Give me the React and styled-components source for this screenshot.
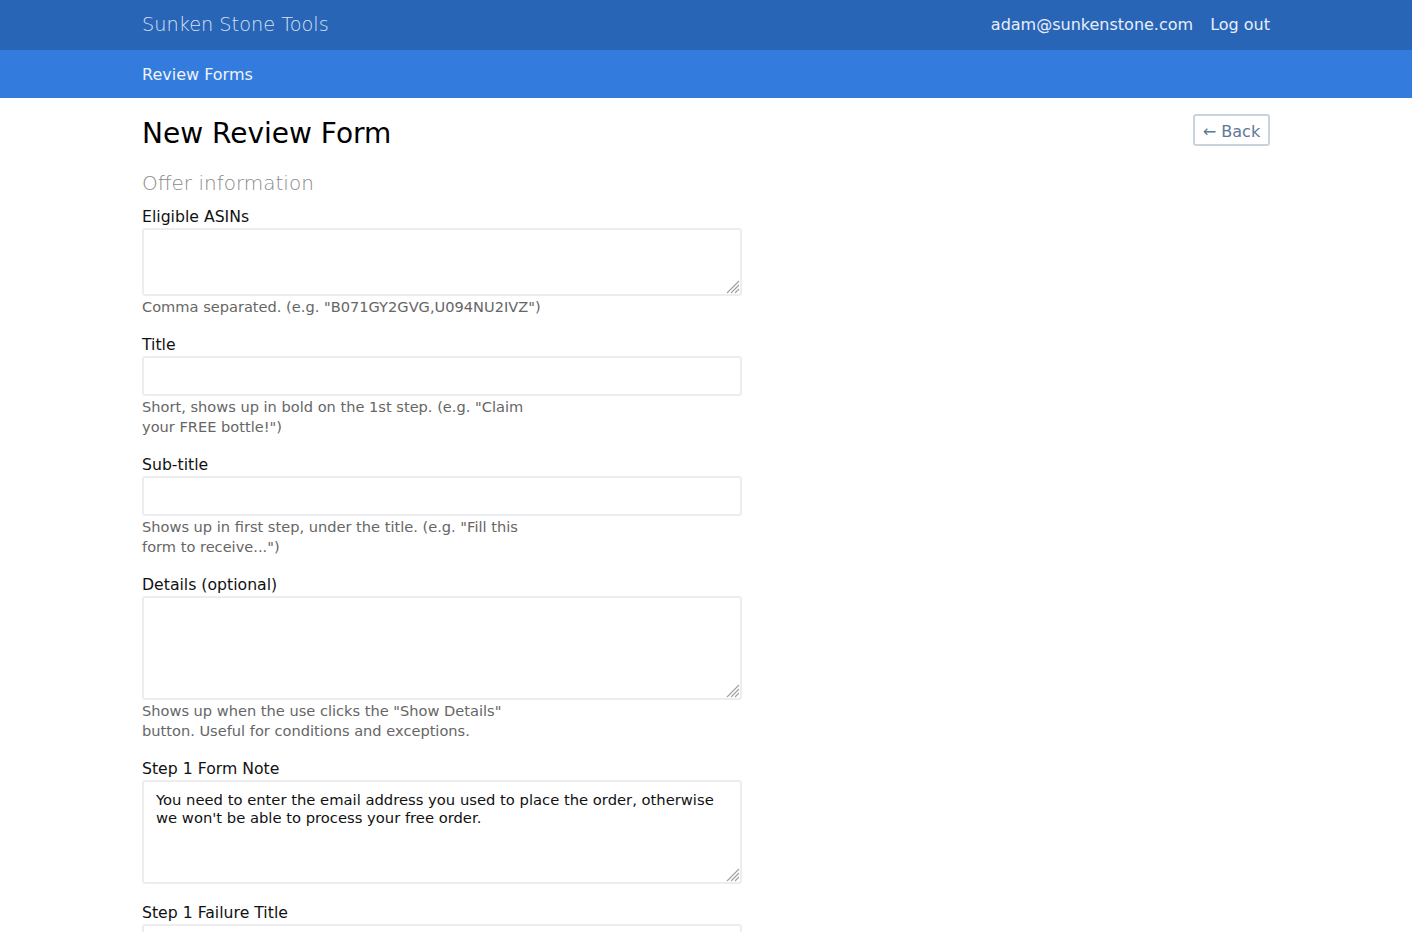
import React from "react";
import styled, { createGlobalStyle } from "styled-components";

const GlobalStyle = createGlobalStyle`
  body {
    margin: 0;
    background: #fff;
    font-family: "DejaVu Sans", "Liberation Sans", sans-serif;
    color: #111;
  }
  * { box-sizing: border-box; }
`;

const fields = [
  { label: "Eligible ASINs", kind: "area", rows: 68, help: 'Comma separated. (e.g. "B071GY2GVG,U094NU2IVZ")' },
  { label: "Title", kind: "input", help: 'Short, shows up in bold on the 1st step. (e.g. "Claim your FREE bottle!")' },
  { label: "Sub-title", kind: "input", help: 'Shows up in first step, under the title. (e.g. "Fill this form to receive...")' },
  { label: "Details (optional)", kind: "area", rows: 104, help: 'Shows up when the use clicks the "Show Details" button. Useful for conditions and exceptions.' },
  {
    label: "Step 1 Form Note",
    kind: "area",
    rows: 104,
    value: "You need to enter the email address you used to place the order, otherwise we won't be able to process your free order.",
  },
  { label: "Step 1 Failure Title", kind: "input" },
];

// firefox-like resize grip
const Grip = () => (
  <GripIcon width="14" height="14" viewBox="0 0 14 14">
    <path d="M13 1 L1 13 M13 5 L5 13 M13 9 L9 13" stroke="#a0a0a0" strokeWidth="1.1" />
  </GripIcon>
);

export default function App() {
  return (
    <>
      <GlobalStyle />
      <TopBar>
        <Container>
          <Brand>Sunken Stone Tools</Brand>
          <UserLinks>
            <NavLink>adam@sunkenstone.com</NavLink>
            <NavLink>Log out</NavLink>
          </UserLinks>
        </Container>
      </TopBar>
      <SubBar>
        <Container>
          <SubLink>Review Forms</SubLink>
        </Container>
      </SubBar>
      <Main>
        <Container>
          <PageHead>
            <Heading>New Review Form</Heading>
            <BackButton>← Back</BackButton>
          </PageHead>
        </Container>
        <Container>
          <Form>
            <SectionTitle>Offer information</SectionTitle>
            {fields.map((f) => (
              <Group key={f.label} $hasHelp={!!f.help}>
                <Label>{f.label}</Label>
                {f.kind === "area" ? (
                  <AreaWrap>
                    <TextArea $h={f.rows} defaultValue={f.value || ""} />
                    <Grip />
                  </AreaWrap>
                ) : (
                  <Input type="text" />
                )}
                {f.help && <Help>{f.help}</Help>}
              </Group>
            ))}
          </Form>
        </Container>
      </Main>
    </>
  );
}

const Container = styled.div`
  width: 1128px;
  margin: 0 auto;
  display: flex;
  align-items: center;
  justify-content: space-between;
`;

const TopBar = styled.div`
  background: #2965b7;
  height: 50px;
  display: flex;
  align-items: center;
`;

const Brand = styled.div`
  font-size: 19.3px;
  font-weight: 200;
  color: #d6e2f4;
  margin-top: -2px;
`;

const UserLinks = styled.div`
  display: flex;
  gap: 17px;
  margin-top: -2px;
`;

const NavLink = styled.a`
  font-size: 16px;
  color: #e8eef8;
  cursor: pointer;
`;

const SubBar = styled.div`
  background: #337bdc;
  height: 48px;
  display: flex;
  align-items: center;
`;

const SubLink = styled.a`
  font-size: 16px;
  color: #eef3fc;
  cursor: pointer;
`;

const Main = styled.div`
  padding-top: 18px;
`;

const PageHead = styled.div`
  width: 100%;
  display: flex;
  justify-content: space-between;
  align-items: flex-start;
`;

const Heading = styled.h1`
  margin: 0;
  font-size: 28px;
  line-height: 36px;
  font-weight: 400;
  color: #000;
`;

const BackButton = styled.button`
  font-family: "DejaVu Sans", sans-serif;
  font-size: 16px;
  color: #5d7896;
  background: #fff;
  border: 2px solid #c9d3de;
  border-radius: 3px;
  height: 32px;
  width: 77px;
  padding: 3px 0 0;
  margin-top: -2px;
  cursor: pointer;
`;

const Form = styled.form`
  width: 600px;
  margin-top: 17px;
  display: flex;
  flex-direction: column;
`;

const SectionTitle = styled.h2`
  margin: 0 0 10px;
  font-size: 20px;
  line-height: 28px;
  font-weight: 300;
  color: #8a8a8a;
`;

const Group = styled.div`
  display: flex;
  flex-direction: column;
  margin-bottom: ${(p) => (p.$hasHelp ? 18 : 19)}px;
`;

const Label = styled.label`
  font-size: 15.7px;
  line-height: 20px;
  margin-bottom: 1px;
  color: #111;
`;

const fieldBase = `
  width: 600px;
  border: 2px solid #ececf1;
  border-radius: 3px;
  font-family: "DejaVu Sans", sans-serif;
  color: #111;
  outline: none;
  background: #fff;
`;

const AreaWrap = styled.div`
  position: relative;
  width: 600px;
`;

const TextArea = styled.textarea`
  ${fieldBase}
  font-size: 14.75px;
  height: ${(p) => p.$h}px;
  padding: 9px 12px 8px;
  line-height: 18px;
  resize: none;
  display: block;
`;

const GripIcon = styled.svg`
  position: absolute;
  right: 2px;
  bottom: 2px;
  pointer-events: none;
`;

const Input = styled.input`
  ${fieldBase}
  font-size: 14.75px;
  height: 40px;
  padding: 0 12px;
`;

const Help = styled.div`
  font-size: 14.6px;
  line-height: 20px;
  padding-top: 1px;
  color: #666;
  max-width: 400px;
`;
